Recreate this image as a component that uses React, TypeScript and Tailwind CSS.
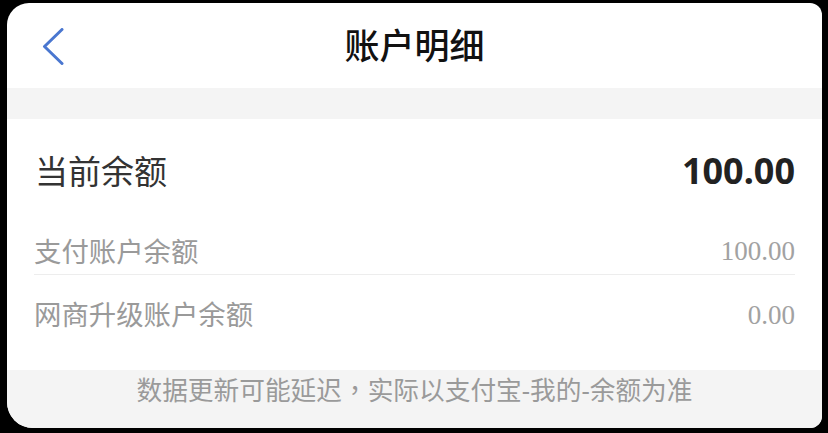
import { ChevronLeft } from 'lucide-react'

const cjk = '"Noto Sans", "Noto Sans CJK SC", sans-serif'

function BackIcon() {
  return (
    <svg width="22" height="37" viewBox="0 0 22 37" fill="none">
      <polyline
        points="20,1.5 2.5,18.5 20,35.5"
        stroke="#4a77d0"
        strokeWidth="3"
        strokeLinecap="round"
        strokeLinejoin="round"
      />
    </svg>
  )
}

function BalanceRow({ label, value, last }: { label: string; value: string; last?: boolean }) {
  return (
    <div
      className={`flex items-center justify-between ${
        last ? 'h-[80px]' : 'h-[46px] border-b border-[#ededed]'
      }`}
    >
      <span className="text-[27.4px] leading-none text-[#9a9a9a]">{label}</span>
      <span className="text-[27px] leading-none text-[#a2a2a2] font-['Liberation_Serif',serif]">
        {value}
      </span>
    </div>
  )
}

export default function App() {
  void ChevronLeft

  return (
    <div className="h-[433px] w-[828px] bg-black pt-[3px] pl-[7px] pr-[6px] pb-[5px]">
      <div
        className="flex h-full flex-col overflow-hidden rounded-tl-[22px] rounded-tr-[12px] rounded-br-[12px] rounded-bl-[26px] bg-white"
        style={{ fontFamily: cjk }}
      >
        {/* nav bar */}
        <div className="grid h-[85px] grid-cols-[1fr_auto_1fr] items-center">
          <div className="pl-[35px] pt-[2px]">
            <BackIcon />
          </div>
          <h1 className="text-[35px] font-medium leading-none text-[#111]">账户明细</h1>
          <div />
        </div>

        <div className="h-[31px] bg-[#f4f4f4]" />

        {/* balances */}
        <div className="h-[251px] px-[27px]">
          <div className="flex h-[110px] items-center justify-between pb-[6px] pl-[1px]">
            <span className="text-[33px] leading-none text-[#333]">当前余额</span>
            <span className="text-[36px] font-bold leading-none text-[#222]">100.00</span>
          </div>
          <BalanceRow label="支付账户余额" value="100.00" />
          <BalanceRow label="网商升级账户余额" value="0.00" last />
        </div>

        {/* footer note */}
        <div className="flex flex-1 items-center justify-center bg-[#f4f4f4] pb-[18px]">
          <p className="text-[25.7px] leading-none text-[#9a9a9a]">
            数据更新可能延迟
            <span className="font-['Noto_Sans_CJK_TC',sans-serif]">，</span>
            实际以支付宝-我的-余额为准
          </p>
        </div>
      </div>
    </div>
  )
}
